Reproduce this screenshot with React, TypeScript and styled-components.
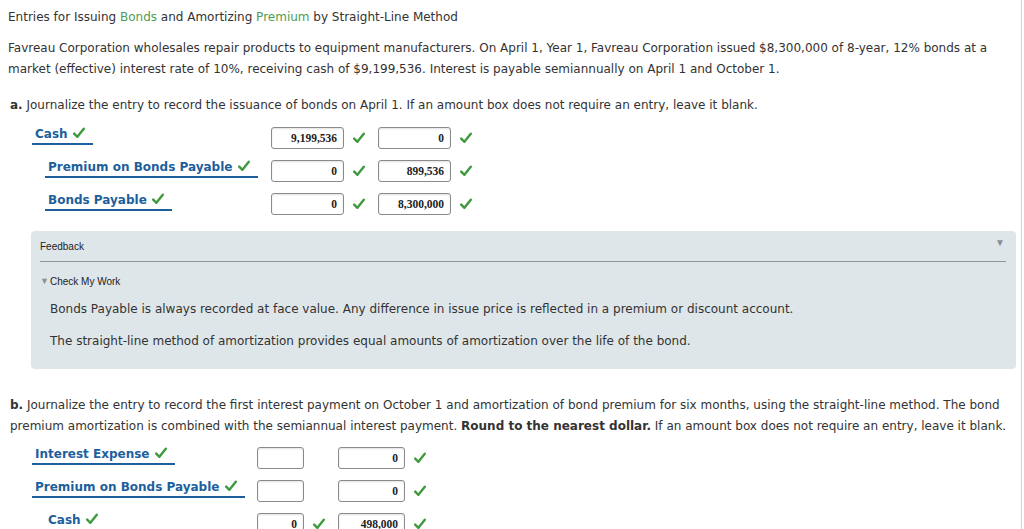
import React from 'react';
import styled, { createGlobalStyle } from 'styled-components';

const GlobalStyle = createGlobalStyle`
  body {
    margin: 0;
    background: #fff;
    font-family: "DejaVu Sans", Verdana, sans-serif;
    color: #333;
  }
`;

type Entry = {
  account: string;
  indent?: boolean;
  debit: string;
  credit: string;
  debitCheck: boolean;
  creditCheck: boolean;
};

const partA: Entry[] = [
  { account: 'Cash', debit: '9,199,536', credit: '0', debitCheck: true, creditCheck: true },
  { account: 'Premium on Bonds Payable', indent: true, debit: '0', credit: '899,536', debitCheck: true, creditCheck: true },
  { account: 'Bonds Payable', indent: true, debit: '0', credit: '8,300,000', debitCheck: true, creditCheck: true },
];

const partB: Entry[] = [
  { account: 'Interest Expense', debit: '', credit: '0', debitCheck: false, creditCheck: true },
  { account: 'Premium on Bonds Payable', debit: '', credit: '0', debitCheck: false, creditCheck: true },
  { account: 'Cash', indent: true, debit: '0', credit: '498,000', debitCheck: true, creditCheck: true },
];

function Check() {
  return (
    <CheckIcon viewBox="0 0 12 12" aria-hidden>
      <path d="M1.2 6.6 L4.4 9.8 L10.8 1.8" fill="none" stroke="#3f9a3f" strokeWidth="2.4" strokeLinecap="round" strokeLinejoin="round" />
    </CheckIcon>
  );
}

type JournalProps = {
  entries: Entry[];
  labelWidth: number;
  debitWidth: number;
  creditWidth: number;
  top: number;
};

function Journal({ entries, labelWidth, debitWidth, creditWidth, top }: JournalProps) {
  return (
    <JournalTable $top={top}>
      {entries.map((e, i) => (
        <JournalRow key={i}>
          <LabelCell $width={labelWidth}>
            <AccountLabel $indent={!!e.indent}>
              {e.account} <Check />
            </AccountLabel>
          </LabelCell>
          <AmountBox $width={debitWidth}>{e.debit}</AmountBox>
          <CheckSlot>{e.debitCheck && <Check />}</CheckSlot>
          <AmountBox $width={creditWidth}>{e.credit}</AmountBox>
          <CheckSlot>{e.creditCheck && <Check />}</CheckSlot>
        </JournalRow>
      ))}
    </JournalTable>
  );
}

export default function App() {
  return (
    <>
      <GlobalStyle />
      <Page>
        <Title>
          Entries for Issuing <Green>Bonds</Green> and Amortizing <Green>Premium</Green> by Straight-Line Method
        </Title>
        <Intro>
          Favreau Corporation wholesales repair products to equipment manufacturers. On April 1, Year 1, Favreau
          Corporation issued $8,300,000 of 8-year, 12% bonds at a market (effective) interest rate of 10%, receiving
          cash of $9,199,536. Interest is payable semiannually on April 1 and October 1.
        </Intro>

        <Question>
          <strong>a.</strong> Journalize the entry to record the issuance of bonds on April 1. If an amount box does
          not require an entry, leave it blank.
        </Question>
        <Journal entries={partA} labelWidth={239} debitWidth={73} creditWidth={73} top={11} />

        <Feedback>
          <FeedbackHeader>
            <span>Feedback</span>
            <Caret>▼</Caret>
          </FeedbackHeader>
          <CheckWork>
            <SmallCaret>▼</SmallCaret>Check My Work
          </CheckWork>
          <FeedbackText>
            Bonds Payable is always recorded at face value. Any difference in issue price is reflected in a premium or
            discount account.
          </FeedbackText>
          <FeedbackText>
            The straight-line method of amortization provides equal amounts of amortization over the life of the bond.
          </FeedbackText>
        </Feedback>

        <QuestionB>
          <strong>b.</strong> Journalize the entry to record the first interest payment on October 1 and amortization
          of bond premium for six months, using the straight-line method. The bond premium amortization is combined
          with the semiannual interest payment. <strong>Round to the nearest dollar.</strong> If an amount box does
          not require an entry, leave it blank.
        </QuestionB>
        <Journal entries={partB} labelWidth={225} debitWidth={47} creditWidth={67} top={10} />
      </Page>
    </>
  );
}

const Page = styled.div`
  width: 1022px;
  height: 529px;
  overflow: hidden;
  box-sizing: border-box;
  border-right: 1px solid #d4d4d4;
  padding-top: 7px;
  font-size: 12px;
`;

const Title = styled.div`
  margin-left: 8px;
  line-height: 21px;
`;

const Green = styled.span`
  color: #4f9c4f;
`;

const Intro = styled.p`
  margin: 10px 0 0 8px;
  width: 1000px;
  line-height: 21px;
`;

const Question = styled.p`
  margin: 15px 0 0 10px;
  width: 1000px;
  line-height: 21px;

  strong {
    font-weight: bold;
  }
`;

const QuestionB = styled(Question)`
  margin-top: 26px;
`;

const JournalTable = styled.div<{ $top: number }>`
  margin: ${(p) => p.$top}px 0 0 32px;
  display: flex;
  flex-direction: column;
  gap: 10px;
`;

const JournalRow = styled.div`
  display: flex;
  align-items: flex-start;
  height: 23px;
`;

const LabelCell = styled.div<{ $width: number }>`
  width: ${(p) => p.$width}px;
  flex-shrink: 0;
`;

const AccountLabel = styled.span<{ $indent: boolean }>`
  display: inline-block;
  margin-left: ${(p) => (p.$indent ? 13 : 0)}px;
  padding: 0 8px 1px 3px;
  border-bottom: 2px solid #1d5f9c;
  color: #1d5f9c;
  font-weight: bold;
  font-size: 12px;
  line-height: 16px;
  white-space: nowrap;
  margin-top: -2px;

  svg {
    margin-left: 1px;
    vertical-align: -1px;
  }
`;

const AmountBox = styled.div<{ $width: number }>`
  width: ${(p) => p.$width}px;
  height: 22px;
  flex-shrink: 0;
  box-sizing: border-box;
  border: 1px solid #8a8a8a;
  border-radius: 3px;
  box-shadow: inset 0 1px 2px rgba(0, 0, 0, 0.12);
  padding: 0 6px;
  font-family: "Liberation Serif", "Times New Roman", serif;
  font-weight: bold;
  font-size: 11.5px;
  color: #222;
  line-height: 20px;
  text-align: right;
`;

const CheckSlot = styled.div`
  width: 34px;
  flex-shrink: 0;
  height: 22px;
  display: flex;
  align-items: center;
  padding-left: 9px;
  box-sizing: border-box;
`;

const CheckIcon = styled.svg`
  width: 12px;
  height: 12px;
  display: inline-block;
`;

const Feedback = styled.div`
  margin: 15px 0 0 31px;
  width: 985px;
  height: 138px;
  box-sizing: border-box;
  background: #dfe6e9;
  border-radius: 4px;
  padding: 0 10px 0 9px;
`;

const FeedbackHeader = styled.div`
  display: flex;
  justify-content: space-between;
  align-items: center;
  height: 30px;
  border-bottom: 1px solid #8f9699;
  font-family: "Liberation Sans", Arial, sans-serif;
  font-size: 10px;
  color: #222;
`;

const Caret = styled.span`
  color: #8a8f92;
  font-size: 10px;
  margin-right: 1px;
  align-self: flex-start;
  margin-top: 6px;
`;

const CheckWork = styled.div`
  margin-top: 12px;
  font-family: "Liberation Sans", Arial, sans-serif;
  font-size: 10px;
  color: #222;
  line-height: 14px;
`;

const SmallCaret = styled.span`
  color: #909090;
  font-size: 9px;
  margin: 0 1px 0 0;
  vertical-align: 1px;
`;

const FeedbackText = styled.p`
  margin: 10px 0 0 10px;
  font-size: 12px;
  line-height: 21px;
  color: #333;

  & + & {
    margin-top: 11px;
  }
`;
